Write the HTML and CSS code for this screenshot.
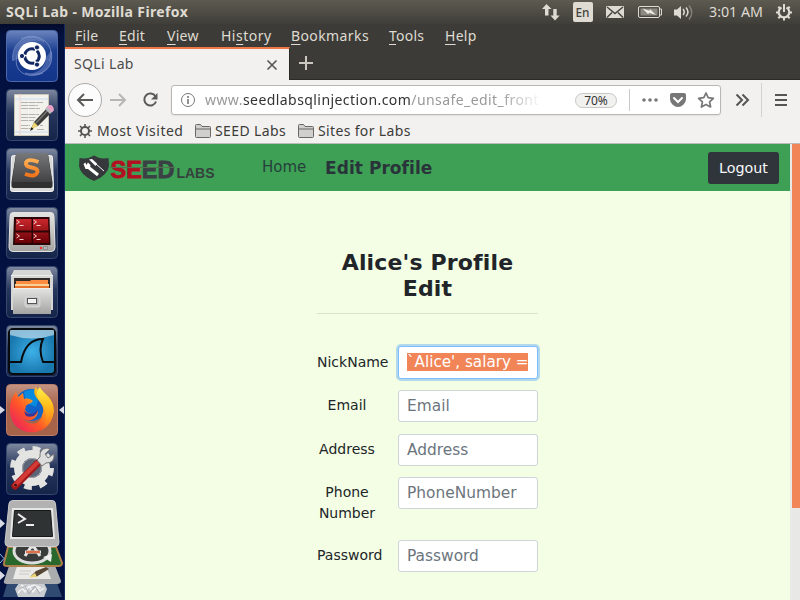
FILE: index.html
```html
<!DOCTYPE html>
<html lang="en">
<head>
<meta charset="utf-8">
<title>SQLi Lab</title>
<link rel="stylesheet" href="styles.css">
</head>
<body>
<div class="desktop">
  <header class="panel">
    <span class="panel-title">SQLi Lab - Mozilla Firefox</span>
    <svg class="tray" width="260" height="24" viewBox="540 0 260 24">
      <g fill="#dfdbd2">
        <path d="M546.500 4l-4.500 5h3v6.500h3.500v-6.500h3zM555 20.500l-4.500-5h2.800v-6.500h3.400v6.500h3z"/>
        <rect x="573" y="2" width="20" height="20" rx="2"/>
        <rect x="606" y="6" width="18" height="12" rx="1"/>
        <path d="M674 9.500h3l4-3.500v13l-4-3.500h-3z"/>
      </g>
      <path d="M607 7l8 6.500 8-6.500M607 17.500l5-5M623 17.500l-5-5" fill="none" stroke="#46453f" stroke-width="1.500"/>
      <rect x="638.500" y="6.500" width="21" height="11" rx="1.500" fill="none" stroke="#dfdbd2"/>
      <rect x="640.500" y="8.500" width="17" height="7" fill="#8c8981"/>
      <path d="M660 9h1.500v6H660" fill="none" stroke="#dfdbd2"/>
      <path d="M642.500 8.500l7 2.300.5-1.800 6 6-7-2.300-.8 1.600z" fill="#eeeae2"/>
      <g fill="none" stroke-width="1.500">
        <path d="M683 9q2.500 3 0 6M686 7.500q4 4.500 0 9" stroke="#dfdbd2"/>
        <path d="M689 5.500q5.500 7 0 14" stroke="#858178"/>
      </g>
      <g fill="none" stroke="#dfdbd2">
        <path d="M781.500 7.500a5.300 5.300 0 1 0 5 0" stroke-width="2.200"/>
        <path d="M784 4v8" stroke-width="2"/>
        <path d="M776 12.500h3M789 12.500h3M778.300 6.800l2 2M789.700 6.800l-2 2M778.300 18.200l2-2M789.700 18.200l-2-2M784 17.500v3" stroke-width="2"/>
      </g>
      <text x="575.500" y="17" class="lang" textLength="14" lengthAdjust="spacingAndGlyphs">En</text>
      <text x="709" y="17" class="clock" textLength="54" lengthAdjust="spacingAndGlyphs">3:01 AM</text>
    </svg>
  </header>

  <aside class="launcher">
    <svg width="0" height="0" class="defs">
      <defs>
        <linearGradient id="gloss" x2="0" y2="1"><stop stop-color="#7f899f"/><stop offset=".45" stop-color="#26365c"/><stop offset="1" stop-color="#152449"/></linearGradient>
        <linearGradient id="blue" x2="0" y2="1"><stop stop-color="#6b84bd"/><stop offset=".4" stop-color="#1c3f91"/><stop offset="1" stop-color="#12358b"/></linearGradient>
        <linearGradient id="brown" x2="0" y2="1"><stop stop-color="#c39483"/><stop offset=".4" stop-color="#a8644b"/><stop offset="1" stop-color="#a7624a"/></linearGradient>
        <linearGradient id="silver" x2="0" y2="1"><stop stop-color="#e4e4e2"/><stop offset="1" stop-color="#a4a4a2"/></linearGradient>
        <linearGradient id="red" x2="0" y2="1"><stop stop-color="#c9282c"/><stop offset="1" stop-color="#680006"/></linearGradient>
        <linearGradient id="orange" x2="0" y2="1"><stop stop-color="#ffb052"/><stop offset="1" stop-color="#f2741b"/></linearGradient>
        <linearGradient id="dark" x2="0" y2="1"><stop stop-color="#77787a"/><stop offset="1" stop-color="#424244"/></linearGradient>
        <radialGradient id="sea"><stop stop-color="#3db0e8"/><stop offset="1" stop-color="#1978ae"/></radialGradient>
        <linearGradient id="fox" x1="1" x2="0" y2="1"><stop stop-color="#fff13d"/><stop offset=".3" stop-color="#ffac19"/><stop offset=".6" stop-color="#ff5429"/><stop offset="1" stop-color="#e51470"/></linearGradient>
        <linearGradient id="tail" x2="0" y2="1"><stop stop-color="#fff04a"/><stop offset=".5" stop-color="#ffbd1c"/><stop offset="1" stop-color="#ff7a1e"/></linearGradient>
      </defs>
    </svg>

    <svg class="tile" viewBox="0 0 52 52">
      <rect x=".5" y=".5" width="51" height="51" rx="4" fill="url(#blue)" stroke="#4d69a8"/>
      <g fill="none" stroke="#8ca0d4" stroke-opacity=".65"><path d="M7 31C4 12 24 0 38 12M45 21C49 38 35 48 19 43M15 9C32 0 51 15 43 31M37 43C18 51 4 38 13 21"/></g>
      <path d="M7 31C5 13 21 3 36 11 20 8 12 18 13 28zM45 21c4 15-7 28-25 23 12 0 20-7 20-17z" fill="#7d91ca" opacity=".45"/>
      <circle cx="26" cy="26" r="14" fill="#fff"/>
      <circle cx="26" cy="26" r="7.300" fill="none" stroke="#122862" stroke-width="3" stroke-dasharray="13.500 1.800" stroke-dashoffset="6.500"/>
      <g fill="#122862" stroke="#fff"><circle cx="16" cy="26" r="2.600"/><circle cx="31" cy="17.400" r="2.600"/><circle cx="31" cy="34.600" r="2.600"/></g>
    </svg>

    <svg class="tile" viewBox="0 0 52 52">
      <rect x=".5" y=".5" width="51" height="51" rx="4" fill="url(#gloss)" stroke="#34476e"/>
      <path d="M8.500 5.500h34v41h-34z" fill="#f3f1eb" stroke="#cac6b8"/>
      <path d="M14 5v42" stroke="#f6cfcb"/><path d="M9 10h33M9 43h33" stroke="#c8dcef"/>
      <path d="M15 13.500h22M15 16.500h17M15 19.500h19M15 25.500h18M15 28.500h15M15 31.500h13M15 36.500h9M15 39.500h10M34 36.500h3M31 40.500h7" stroke="#b3b3b1" stroke-dasharray="7 .6"/>
      <path d="M26 38l2-5 15-16 4 5-15 15z" fill="#3b3b39"/><path d="M30 34l14-15" stroke="#757575" stroke-width="1.500"/>
      <path d="M24.500 41l3.500-8 4 4z" fill="#ecd675"/><path d="M24 42l1.500-4 2 2z" fill="#211c14"/>
      <path d="M39 20l4-4 5 5-4 4z" fill="#b6b9bb"/><path d="M42 18q2.500-2 4 0t0 4z" fill="#e68ab8" stroke="#e9a4c8" stroke-width="2"/>
    </svg>

    <svg class="tile" viewBox="0 0 52 52">
      <rect x=".5" y=".5" width="51" height="51" rx="4" fill="url(#gloss)" stroke="#34476e"/>
      <path d="M5.500 9.500q0-2 2-2h37q2 0 2 2l1 32q0 2-2 2h-39q-2 0-2-2z" fill="#d9d9d9" stroke="#f4f4f4"/>
      <path d="M10 6h32l4.500 28v4q0 2-2 2h-37q-2 0-2-2v-4z" fill="#303031"/><path d="M12 5h28q2 0 2 2l4 27H6l4-27q0-2 2-2z" fill="url(#dark)"/>
      <path d="M32.500 14q-10-4-12.500.5-1 4 5.500 5t6 4.500q-2 6-12.500 2" fill="none" stroke="url(#orange)" stroke-width="3.800"/>
    </svg>

    <svg class="tile" viewBox="0 0 52 52">
      <rect x=".5" y=".5" width="51" height="51" rx="4" fill="url(#gloss)" stroke="#34476e"/>
      <path d="M7 5.500h38q3 0 3 4l1 31q0 4-4 4H7q-4 0-4-4l1-31q0-4 3-4z" fill="url(#silver)" stroke="#e0e0dd"/>
      <path d="M8 10h35.500l1 28H7z" fill="#2c0507"/><path d="M10 12h15.500v11.500H9.500zM27 12h15l.5 11.500H27zM9.300 25.500h16.200V36H9zM27 25.500h15.500L43 36H27z" fill="url(#red)"/>
      <g fill="none" stroke="#f4c9c9"><path d="M10.500 13l3 2-3 2M13.500 18.500h4M27.500 13l3 2-3 2M30.500 18.500h4M10.500 27l3 2-3 2M13.500 32.500h4M27.500 27l3 2-3 2M30.500 32.500h4"/></g>
      <circle cx="35" cy="41" r="1.300" fill="#f33"/><path d="M37.500 39.500h4v3h-4z" fill="#b4b4b2" stroke="#8b8b89"/>
    </svg>

    <svg class="tile" viewBox="0 0 52 52">
      <rect x=".5" y=".5" width="51" height="51" rx="4" fill="url(#gloss)" stroke="#34476e"/>
      <path d="M8 4h36l3 6v34H5V10z" fill="#d6d6d4"/><path d="M5 9.500h42" stroke="#ececea"/><path d="M8 12h36v12H8z" fill="#322b27"/>
      <path d="M10 15h14l1-1h17v9H10z" fill="#fb8c42"/><path d="M9 18h34v2H9z" fill="#f9d196"/><path d="M9 20h34v3H9z" fill="#e9752d"/>
      <path d="M7 22h38v26H7z" fill="url(#silver)"/><path d="M7 22.500h38" stroke="#eee"/>
      <rect x="19.500" y="30.500" width="14" height="10" rx="2" fill="#bbb" stroke="#d4d4d4" stroke-width="2"/><rect x="21.500" y="32.500" width="9" height="5" fill="#f3f3f3" stroke="#555"/>
    </svg>

    <svg class="tile" viewBox="0 0 52 52">
      <rect x=".5" y=".5" width="51" height="51" rx="4" fill="url(#gloss)" stroke="#34476e"/>
      <rect x="3" y="4" width="46" height="45" rx="4" fill="url(#sea)" stroke="#080b0d" stroke-width="2"/>
      <path d="M4 5h44v5q-22 7-44 0z" fill="#cce3ef" opacity=".65"/>
      <path d="M4 37h11C18 21 25 14 37 14c-4 8-3 15 0 23h11" fill="none" stroke="#080b0d" stroke-width="2"/>
    </svg>

    <div class="running">
      <svg class="pip" width="6" height="8"><path d="M0 0l5 4-5 4z" fill="#d7dae4"/></svg>
      <svg class="tile" viewBox="0 0 52 52">
        <rect x=".5" y=".5" width="51" height="51" rx="4" fill="url(#brown)" stroke="#bb7c68"/>
        <circle cx="25" cy="21" r="16" fill="#1263c8"/><path d="M18 8c6-4 12-3 16 1l-4 14-10-4z" fill="#078be0"/>
        <path d="M4 25C4 17 7 12 10 8l2 5 5-4 1 6c4-1 7 0 9 2-2 3-6 3-7 5l-1 4c3 5 8 5 13 1 0 8-10 13-16 7 6 8 18 8 20-3 3-6 0-10-2-13-5-5-8-10-4-15 2 6 17 10 17 25 0 26-43 29-43-3z" fill="url(#fox)"/>
        <path d="M34 3c2 6 14 10 14 24-1 7-4 11-9 14 2-8 1-15-3-21-6-6-7-12-2-17z" fill="url(#tail)"/>
        <path d="M18 27c5 5 11 3 14-2-1 7-6 9-12 7z" fill="#38359b"/>
      </svg>
      <svg class="pip" width="6" height="8"><path d="M6 0L1 4l5 4z" fill="#d7dae4"/></svg>
    </div>

    <svg class="tile" viewBox="0 0 52 52">
      <rect x=".5" y=".5" width="51" height="51" rx="4" fill="url(#gloss)" stroke="#34476e"/>
      <circle cx="26" cy="25" r="19.500" fill="none" stroke="#e1e1e0" stroke-width="5" stroke-dasharray="7.650 7.660"/>
      <circle cx="26" cy="25" r="14" fill="none" stroke="#e4e4e3" stroke-width="8"/><circle cx="26" cy="25" r="9.500" fill="#5c6577" stroke="#aaa"/>
      <path d="M9 43L32 20" stroke="#a01818" stroke-width="7" stroke-linecap="round"/><path d="M9 42L31 20" stroke="#d43b36" stroke-width="4" stroke-linecap="round"/>
      <path d="M31 17l3-3q-1-8 7-9l3 1-5 5 3 4 6-4q1 9-8 9l-4 3z" fill="#ddd" stroke="#777"/><circle cx="9.500" cy="42" r="1.500" fill="#4b1010"/>
    </svg>

    <svg class="stack" width="65" height="102" viewBox="0 498 65 102">
      <path d="M8 580h48l6 17H3z" fill="#304a71"/>
      <path d="M19 583q13-5 25 0l3 6-3 8H18l-3-8z" fill="#c9cdd0"/><path d="M18 593l4-5 3 4 4-6 4 6 4-5 3 4 4-3M21 585l6 3 7-3 7 3" fill="none" stroke="#f1f1f1" stroke-width="1.500"/><path d="M20 589l5-3 4 8 6-8 5 8" fill="none" stroke="#a8acb0"/>
      <path d="M10 563h44l7 18q0 3-4 3H7q-4 0-3-3z" fill="#aaacae"/><path d="M17 566h29l5 13H13z" fill="#eae9e6"/><path d="M20 571h11M19 574h10" stroke="#c8c8c6"/><path d="M31 576l5-5 10-4 3 2-13 8z" fill="#554733"/><path d="M29 577.500l6-4.500 2 4z" fill="#edd575"/>
      <path d="M8 547h48l6 16q0 3-4 3H7q-4 0-3-3z" fill="#28682d" stroke="#ad7e48" stroke-width="2"/>
      <ellipse cx="32" cy="551" rx="18" ry="12" fill="#3a3b3b" stroke="#dedede" stroke-width="3"/><path d="M25 556l6-9h3l6 9M25 552h16" fill="none" stroke="#e7e7e7" stroke-width="3"/><path d="M26 552h14" stroke="#dd714b" stroke-width="2.500"/><path d="M43 557l9-3-1 8z" fill="#eee"/>
      <path d="M13 500.500h39q3 0 3.500 3l3.500 39q0 4-4 4H9q-4 0-4-4l4-39q.5-3 4-3z" fill="#b2b2b2" stroke="#ccc"/>
      <path d="M12 508h41l2 31H10z" fill="#e6e6e6"/><path d="M14.500 510.500h36l2 26h-40z" fill="#303334" stroke="#171919"/><path d="M18 514l7 5-7 4M26 525h8" fill="none" stroke="#eee" stroke-width="2"/>
      <path d="M0 519l5 4.500-5 4.500zM0 571l5 4.500-5 4.500z" fill="#d7dae4"/><path d="M0 554l4 4.500-4 4.500" fill="none" stroke="#8cc2f1"/>
    </svg>
  </aside>

  <main class="window">
    <nav class="menubar">
      <span class="m1"><u>F</u>ile</span><span class="m2"><u>E</u>dit</span><span class="m3"><u>V</u>iew</span><span class="m4">Hi<u>s</u>tory</span><span class="m5"><u>B</u>ookmarks</span><span class="m6"><u>T</u>ools</span><span class="m7"><u>H</u>elp</span>
    </nav>
    <div class="tabs">
      <div class="tab"><span>SQLi Lab</span><svg width="12" height="12"><path d="M1.500 1.500l9 9M10.500 1.500l-9 9" stroke="#5a5955" stroke-width="1.700"/></svg></div>
      <svg class="plus" width="14" height="14"><path d="M7 0v14M0 7h14" stroke="#c9c7c0" stroke-width="2"/></svg>
    </div>
    <div class="toolbar">
      <svg width="106" height="40" viewBox="65 80 106 40" fill="none" stroke="#5a5a58" stroke-width="2">
        <circle cx="85" cy="100" r="16.500" fill="#fcfcfc" stroke="#aaa" stroke-width="1"/>
        <path d="M93 100H78M84 94l-6 6 6 6"/><path d="M110 100h15M119 94l6 6-6 6" stroke="#b7b6b4"/>
        <path d="M155.500 96.500a6 6 0 1 0 .5 5"/><path d="M157.500 93v6.500H151z" fill="#5a5a58" stroke="none"/>
      </svg>
      <div class="urlbar">
        <svg width="16" height="16"><circle cx="8" cy="8" r="6.500" fill="none" stroke="#777"/><path d="M8 7v5M8 4v2" stroke="#777" stroke-width="1.600"/></svg>
        <div class="url">www.<b>seedlabsqlinjection.com</b>/unsafe_edit_front</div>
        <span class="zoom">70%</span>
        <svg class="actions" width="91" height="28" viewBox="629 86 91 28">
          <path d="M629.500 89v22" stroke="#c9c9c9"/><g fill="#777"><circle cx="644" cy="100" r="1.800"/><circle cx="650" cy="100" r="1.800"/><circle cx="656" cy="100" r="1.800"/></g>
          <path d="M672 93h12q2 0 2 2v4q0 3-2.500 5.500Q681 107 678 107t-5.500-2.500Q670 102 670 99v-4q0-2 2-2z" fill="#777"/><path d="M674 98l4 4 4-4" fill="none" stroke="#fff" stroke-width="2" stroke-linecap="round"/>
          <path d="M706 93l2.200 4.700 5.200.6-3.800 3.500 1 5.200-4.600-2.600-4.600 2.600 1-5.200-3.800-3.500 5.200-.6z" fill="none" stroke="#777" stroke-width="1.700" stroke-linejoin="round"/>
        </svg>
      </div>
      <svg width="79" height="40" viewBox="721 80 79 40" fill="none" stroke="#555553" stroke-width="2"><path d="M736.500 94.500l5.500 5.500-5.500 5.500M742.500 94.500l5.500 5.500-5.500 5.500"/><path d="M761.500 83v34" stroke="#d2d1cf" stroke-width="1"/><path d="M775 95h12M775 100h12M775 105h12"/></svg>
    </div>
    <div class="bookmarks">
      <svg width="14" height="14"><circle cx="7" cy="7" r="4" fill="none" stroke="#555" stroke-width="2"/><path d="M7 0v3M7 11v3M0 7h3M11 7h3M2 2l2 2M10 10l2 2M12 2l-2 2M4 10l-2 2" stroke="#555" stroke-width="1.600"/></svg>
      <span class="b1">Most Visited</span>
      <svg width="16" height="14"><path d="M.5 12.500v-11q0-1 1-1h4l1.500 2h7.500q1 0 1 1v9q0 1-1 1h-13q-1 0-1-1zM.5 5h15" fill="#d0cfcd" stroke="#696865"/></svg>
      <span class="b2">SEED Labs</span>
      <svg width="16" height="14"><path d="M.5 12.500v-11q0-1 1-1h4l1.500 2h7.500q1 0 1 1v9q0 1-1 1h-13q-1 0-1-1zM.5 5h15" fill="#d0cfcd" stroke="#696865"/></svg>
      <span class="b3">Sites for Labs</span>
    </div>
    <div class="viewport">
      <div class="page">
        <nav class="navbar">
          <svg class="logo" width="140" height="30" viewBox="78 153 140 30">
            <path d="M94 155.500q6 4 14.500 2.500l.5 8q-1 9-15 15-14-6-15-15l.5-8q8.500 1.500 14.500-2.500z" fill="#35393c"/>
            <path d="M88 167l10 8" stroke="#fff" stroke-width="3"/><path d="M96 164l8 7" stroke="#fff"/><path d="M89 159.500l3-.5 5 4.500-1.500 2.500z" fill="#fff"/><path d="M83.500 164l2-1.500.8 2.500 1.700-2.500 2.500 2.500-1 4-4 0z" fill="#fff"/>
            <text class="seed" x="110.500" y="177.500" textLength="64" lengthAdjust="spacingAndGlyphs"><tspan fill="#b30f22" stroke="#b30f22">SE</tspan><tspan fill="#3a4044" stroke="#3a4044">ED</tspan></text>
            <text class="labs" x="176.500" y="178" textLength="38" lengthAdjust="spacingAndGlyphs">LABS</text>
            <path d="M110 167.500h65" stroke="#54704f"/>
          </svg>
          <span class="home">Home</span>
          <span class="edit">Edit Profile</span>
          <button class="logout">Logout</button>
        </nav>
        <form class="profile">
          <h1>Alice's Profile<br>Edit</h1>
          <div class="row"><label>NickName</label><div class="field focused"><mark>`Alice', salary =</mark></div></div>
          <div class="row"><label>Email</label><div class="field">Email</div></div>
          <div class="row"><label>Address</label><div class="field">Address</div></div>
          <div class="row tall"><label>Phone<br>Number</label><div class="field">PhoneNumber</div></div>
          <div class="row"><label>Password</label><div class="field">Password</div></div>
        </form>
      </div>
      <div class="scrollbar"><div class="thumb"></div></div>
    </div>
  </main>
</div>
</body>
</html>
```

FILE: styles.css
```css
* { box-sizing: border-box; }
body { margin: 0; overflow: hidden; font-family: "Noto Sans", "Open Sans", sans-serif; }
svg { display: block; flex: none; }
.desktop { width: 800px; height: 600px; display: grid; grid-template: 24px 576px / 65px 735px; overflow: hidden; }

.panel { grid-column: 1 / 3; display: flex; justify-content: space-between; align-items: center; background: linear-gradient(#5d5a50, #3f3e39); color: #dfdbd2; }
.panel-title { padding-left: 6px; font-size: 14px; font-weight: 700; line-height: 24px; letter-spacing: .36px; white-space: nowrap; }
.lang { font-size: 13px; fill: #454440; font-weight: 500; }
.clock { font-size: 14px; fill: #dfdbd2; }

.launcher { background: linear-gradient(#030b2b, #02113f 12px, #02113f); padding-top: 6px; display: flex; flex-direction: column; align-items: center; gap: 7px; overflow: hidden; border-right: 1px solid #142a62; }
.defs { margin-bottom: -7px; }
.tile { width: 52px; height: 52px; flex: none; }
.running { display: flex; align-items: center; width: 64px; flex: none; }
.stack { width: 65px; margin-top: -4px; }

.window { display: flex; flex-direction: column; min-width: 0; background: #f2f1f0; }
.menubar { height: 23px; flex: none; background: #3c3b37; color: #dfdbd2; font-size: 14px; line-height: 23px; display: flex; padding-left: 10px; white-space: nowrap; letter-spacing: .25px; }
.menubar u { text-underline-offset: 3px; text-decoration-thickness: 1px; }
.m1 { width: 44px; } .m2 { width: 48px; } .m3 { width: 54px; } .m4 { width: 70px; } .m5 { width: 98px; } .m6 { width: 56px; }
.m4 { letter-spacing: .5px; } .m5 { letter-spacing: .4px; }
.tabs { height: 33px; flex: none; background: #3c3b37; display: flex; align-items: center; border-bottom: 1px solid #2b2a27; }
.tab { width: 225px; height: 33px; flex: none; align-self: flex-start; background: #f2f1f0; border-top: 2px solid #f07746; border-right: 1px solid #2b2a27; display: flex; justify-content: space-between; align-items: center; padding: 0 11px 2px 9px; font-size: 14px; color: #4c4c4b; letter-spacing: .35px; }
.tab svg { margin-top: 2px; }
.plus { margin-left: 9px; }
.toolbar { height: 40px; flex: none; display: flex; align-items: center; }
.urlbar { width: 550px; height: 30px; border: 1px solid #b9b7b4; border-radius: 3px; background: #fff; display: flex; align-items: center; padding-left: 8px; box-shadow: 0 1px 2px #0001; }
.url { width: 338px; margin-left: 9px; font-size: 14px; line-height: 28px; letter-spacing: .43px; overflow: hidden; white-space: nowrap; color: #999; -webkit-mask-image: linear-gradient(90deg, #000 295px, transparent 337px); mask-image: linear-gradient(90deg, #000 295px, transparent 337px); }
.url b { color: #333; font-weight: 400; }
.zoom { width: 42px; height: 15px; margin-left: 32px; border: 1px solid #c8c7c5; border-radius: 8px; background: #f1f1f0; color: #333; font-size: 12px; line-height: 13px; text-align: center; flex: none; }
.actions { margin-left: auto; }
.bookmarks { height: 24px; flex: none; border-bottom: 1px solid #bdbbb8; display: flex; align-items: center; padding: 0 0 2px 13px; color: #3d3c39; font-size: 14px; white-space: nowrap; }
.b1, .b2, .b3 { margin-left: 5px; }
.b1 { width: 98px; letter-spacing: .5px; } .b2 { width: 83px; margin-left: 4px; letter-spacing: .4px; } .b3 { margin-left: 4px; letter-spacing: .35px; }

.viewport { flex: 1; display: flex; min-height: 0; font-family: "DejaVu Sans", sans-serif; }
.page { width: 725px; background: #f3fee4; color: #212529; }
.navbar { height: 47px; background: #3ea055; display: flex; align-items: center; padding: 0 11px 0 13px; }
.home { margin-left: 44px; font-size: 15px; line-height: 20px; margin-top: -2px; color: #25403b; width: 63px; }
.edit { font-size: 17px; font-weight: 700; color: #29343a; white-space: nowrap; letter-spacing: .05px; }
.logout { margin-left: auto; width: 71px; height: 32px; padding: 0; border: 0; border-radius: 3px; background: #2f353a; color: #f8f9fa; font: 14.300px "DejaVu Sans", sans-serif; }
.seed { font: 700 24.500px "Liberation Sans", sans-serif; stroke-width: .8px; }
.labs { font: 700 15px "Liberation Sans", sans-serif; fill: #35423d; }
.profile { width: 221px; margin: 59px 0 0 252px; }
h1 { margin: 0 0 32px; height: 64px; font-size: 22px; line-height: 26px; letter-spacing: .15px; text-align: center; white-space: nowrap; border-bottom: 1px solid #dae4cc; }
.row { height: 43.500px; display: flex; justify-content: space-between; }
.tall { height: 63px; }
label { width: 60px; text-align: center; white-space: nowrap; font-size: 14px; line-height: 21px; padding-top: 5px; }
.row:first-of-type label, .row:nth-of-type(3) label { padding-top: 6px; }
.field { width: 140px; height: 32px; border: 1px solid #ced4da; border-radius: 3px; background: #fff; color: #6c757d; font-size: 15.400px; line-height: 30px; padding-left: 8px; white-space: nowrap; overflow: hidden; }
.row:nth-of-type(3) .field { margin-top: .6px; }
.focused { height: 33px; line-height: 31px; border-color: #80bdff; box-shadow: 0 0 0 2px #b0d9ec; }
mark { display: inline-block; width: 121px; height: 18px; line-height: 18px; font-size: 15.200px; background: #f18558; color: #fff; }
.scrollbar { width: 10px; background: #e8e8e7; padding-left: 2px; }
.thumb { height: 364px; background: #f18558; }
```
